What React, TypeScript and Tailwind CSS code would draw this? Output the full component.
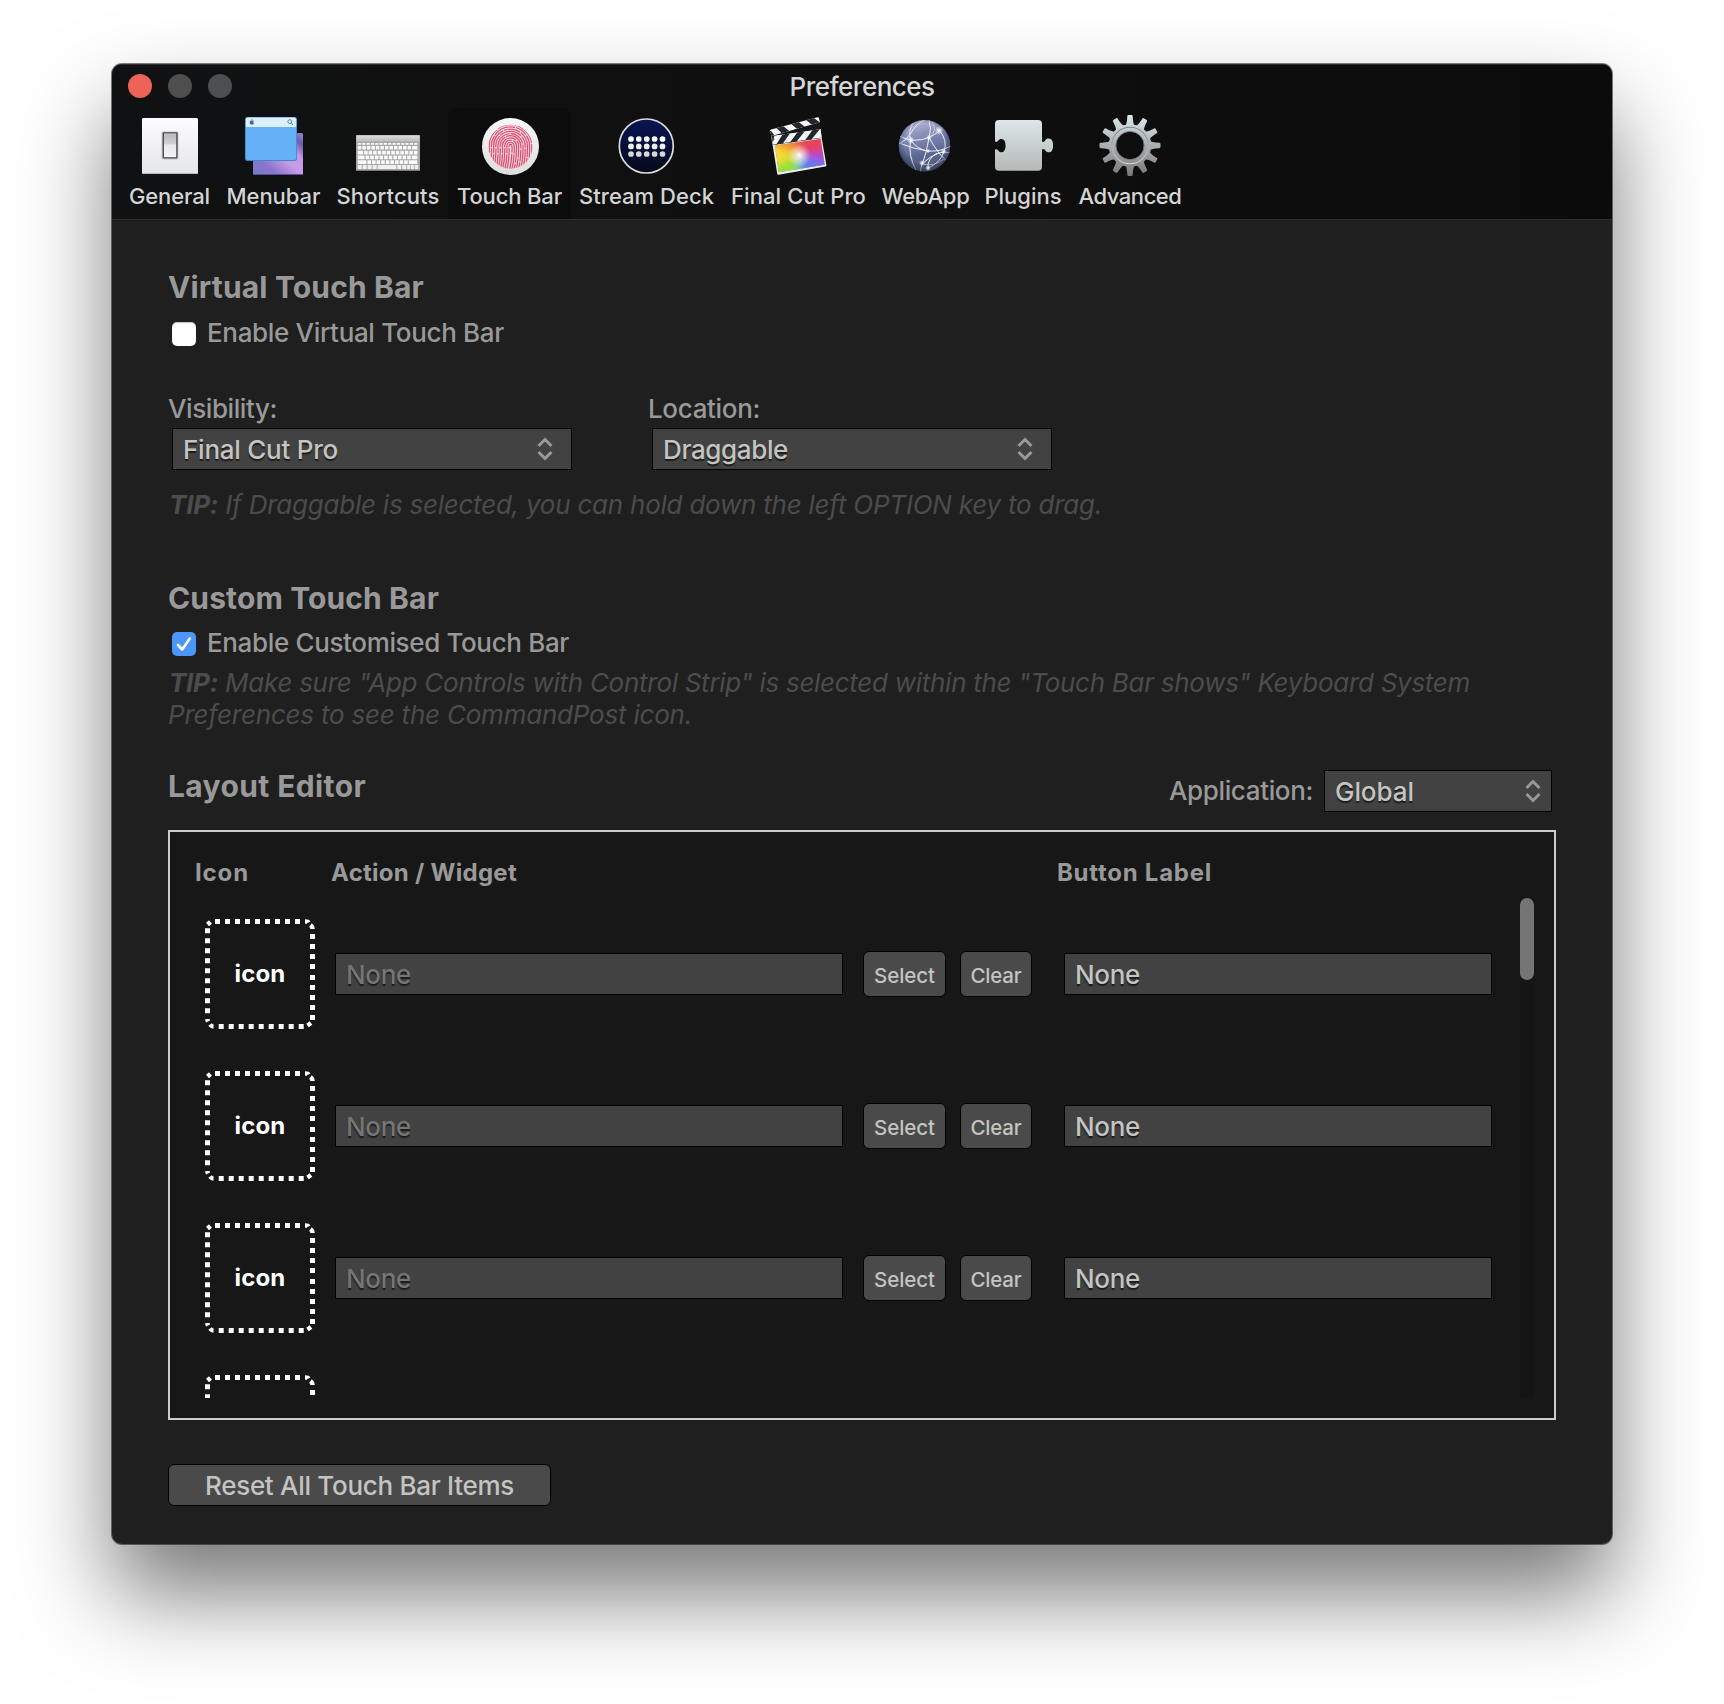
import { useLayoutEffect, useRef, useState } from "react";
import type { ReactNode } from "react";

/** Single line of text whose tracking is adjusted to fill a given width. */
function Fit({ w, children, className = "" }: { w: number; children: ReactNode; className?: string }) {
  const ref = useRef<HTMLSpanElement>(null);
  const [spacing, setSpacing] = useState(0);
  useLayoutEffect(() => {
    const el = ref.current;
    if (!el) return;
    const n = (el.textContent || "").length;
    setSpacing((w - el.getBoundingClientRect().width) / n);
  }, [w]);
  return (
    <span
      ref={ref}
      className={`inline-block whitespace-nowrap ${className}`}
      style={{ letterSpacing: `${spacing}px` }}
    >
      {children}
    </span>
  );
}

function GeneralIcon() {
  return (
    <svg className="size-16" viewBox="0 0 64 64">
      <defs>
        <linearGradient id="genPlate" x1="0" y1="0" x2="0" y2="1">
          <stop offset="0" stopColor="#fdfdfe" />
          <stop offset="1" stopColor="#e4e5ea" />
        </linearGradient>
        <linearGradient id="genSwitch" x1="0" y1="0" x2="0" y2="1">
          <stop offset="0" stopColor="#e2e2e4" />
          <stop offset="0.1" stopColor="#bcbcc0" />
          <stop offset="0.44" stopColor="#d2d2d6" />
          <stop offset="0.48" stopColor="#e8e8ec" />
          <stop offset="1" stopColor="#f3f3f6" />
        </linearGradient>
      </defs>
      <rect x="4" y="5" width="56" height="56" rx="1.5" fill="url(#genPlate)" />
      <path d="M4.5 60.5H59.5" stroke="#b9babd" strokeWidth="1" />
      <rect x="23.5" y="18.5" width="17" height="28" rx="1.5" fill="#c4c5c8" />
      <rect x="25.3" y="19.8" width="13.6" height="25" rx="0.5" fill="url(#genSwitch)" stroke="#46474b" strokeWidth="1.3" />
    </svg>
  );
}

function MenubarIcon() {
  return (
    <svg className="size-16" viewBox="0 0 64 64">
      <defs>
        <linearGradient id="mbDesk" x1="0" y1="1" x2="1" y2="0">
          <stop offset="0" stopColor="#6f7fc4" />
          <stop offset="0.25" stopColor="#8b74cf" />
          <stop offset="0.5" stopColor="#c79be6" />
          <stop offset="0.68" stopColor="#c59ae8" />
          <stop offset="0.85" stopColor="#6f5db4" />
          <stop offset="1" stopColor="#a184c8" />
        </linearGradient>
      </defs>
      <rect x="11" y="20" width="50" height="42" rx="1.5" fill="url(#mbDesk)" />
      <path d="M11.5 61.5H60.5" stroke="#5a4ca0" strokeWidth="1" />
      <rect x="3" y="4" width="52" height="44" rx="2.5" fill="#3f87c6" />
      <rect x="3.8" y="4.6" width="50.4" height="42.4" rx="2" fill="#64b1f8" />
      <path d="M3.8 14V6.6a2 2 0 0 1 2-2H52.2a2 2 0 0 1 2 2V14Z" fill="#dceffd" />
      <path d="M9.1 7.6c.7-.3 1.3.1 1.7 0 .6-.4 .8-.2 1 .2-.9.8-.6 2 .2 2.4-.4 1-1 1.7-1.7 1.3-.4-.2-.7-.1-1.1.1C8 11.9 6.5 8.3 9.1 7.600ZM9.4 7.200c0-.8.500-1.300 1.200-1.400 0 .8-.5 1.400-1.200 1.400Z" fill="#4c6a86" />
      <circle cx="47.8" cy="8.6" r="1.900" fill="none" stroke="#4c7494" strokeWidth="0.9" />
      <path d="M49.200 10l1.900 1.900" stroke="#4c7494" strokeWidth="1" />
    </svg>
  );
}

function KeyboardIcon() {
  const keys: ReactNode[] = [];
  const rows = [
    { y: 29.9, h: 1.9, n: 14, off: 0, last: 0 },
    { y: 32.9, h: 3.7, n: 13, off: 0, last: 1.8 },
    { y: 37.7, h: 3.7, n: 13, off: 1.8, last: 0 },
    { y: 42.5, h: 3.7, n: 12, off: 3.2, last: 2 },
    { y: 47.3, h: 3.7, n: 11, off: 5, last: 5 },
  ];
  rows.forEach((r, j) => {
    const cell = (60.6 - r.off - r.last) / r.n;
    for (let i = 0; i < r.n; i++) {
      const x = 1.8 + (i === 0 ? 0 : r.off + i * cell);
      const w = cell - 1 + (i === 0 ? r.off : 0) + (i === r.n - 1 ? r.last : 0);
      keys.push(<rect key={`${j}-${i}`} x={x} y={r.y} width={w} height={r.h} rx="0.4" fill="#fafafa" />);
    }
  });
  const bottom = [
    [1.8, 4], [6.7, 4], [11.7, 4], [16.7, 4], [21.7, 18.5], [41.2, 4], [46.2, 4], [51.1, 3], [54.9, 3], [58.7, 3.5],
  ];
  return (
    <svg className="size-16" viewBox="0 0 64 64">
      <defs>
        <linearGradient id="kbTop" x1="0" y1="0" x2="0" y2="1">
          <stop offset="0" stopColor="#dcdcdc" />
          <stop offset="1" stopColor="#bdbdbd" />
        </linearGradient>
      </defs>
      <rect x="0" y="22" width="64" height="36" rx="0.8" fill="#a8a8a8" />
      <rect x="0.5" y="22.5" width="63" height="6" fill="url(#kbTop)" />
      <path d="M0 57.5H64" stroke="#777" strokeWidth="1" />
      {keys}
      {bottom.map(([x, w]) => (
        <rect key={x} x={x} y="52" width={w} height="3.9" rx="0.4" fill="#f0f0f0" />
      ))}
    </svg>
  );
}

function TouchIcon() {
  const arches = [1.5, 3.7, 5.9, 8.1, 10.3, 12.5, 14.7, 16.9, 19.1, 21.3];
  return (
    <svg className="size-16" viewBox="0 0 64 64">
      <defs>
        <linearGradient id="tbRing" x1="0" y1="0" x2="0" y2="1">
          <stop offset="0" stopColor="#f8f8f8" />
          <stop offset="1" stopColor="#dedede" />
        </linearGradient>
        <clipPath id="tbClip">
          <circle cx="32.5" cy="33.7" r="22" />
        </clipPath>
      </defs>
      <circle cx="32.5" cy="33.5" r="28.5" fill="url(#tbRing)" />
      <g clipPath="url(#tbClip)" fill="none" stroke="#e8486f" strokeWidth="1.3">
        {arches.map((r, i) => (
          <path
            key={r}
            d={`M${32.5 - r - 2.5} 58Q${32.5 - r + 0.8} 46 ${32.5 - r} 33A${r} ${r} 0 0 1 ${32.5 + r} 33Q${32.5 + r + 0.3} 48 ${32.5 + r - 3} 58`}
            strokeDasharray={i % 2 ? "17 0.9 26 0.9" : "23 0.9 12 0.9"}
          />
        ))}
      </g>
    </svg>
  );
}

function StreamDeckIcon() {
  return (
    <svg className="size-16" viewBox="0 0 64 64">
      <defs>
        <linearGradient id="sdBg" x1="0" y1="0" x2="0" y2="1">
          <stop offset="0" stopColor="#0a1552" />
          <stop offset="0.45" stopColor="#070f3c" />
          <stop offset="1" stopColor="#060a18" />
        </linearGradient>
      </defs>
      <circle cx="31.3" cy="33" r="27" fill="url(#sdBg)" stroke="#dcdcdc" strokeWidth="1.7" />
      {[26, 33.4, 41].map((y, j) =>
        [16, 23.8, 31.7, 39.6, 47.5].map((x) => (
          <circle key={`${x}-${y}`} cx={x} cy={y} r="2.85" fill={["#ffffff", "#efefef", "#d8d8d8"][j]} />
        ))
      )}
    </svg>
  );
}

function FinalCutIcon() {
  return (
    <svg className="size-16" viewBox="0 0 64 64">
      <defs>
        <clipPath id="fcBody">
          <path d="M8 32.6L53.5 26 57.7 51.8 11.7 59.2Z" />
        </clipPath>
        <clipPath id="fcArm">
          <path d="M2.8 18.2Q2.6 16.8 4 16.4L50.5 4.3Q51.7 4 52 5.2L52.9 9.2 4.5 23Z" />
        </clipPath>
        <clipPath id="fcBar">
          <path d="M4.2 23L53.5 16 54.7 25 6.3 32Z" />
        </clipPath>
        <filter id="fcBlur" x="-40%" y="-40%" width="180%" height="180%">
          <feGaussianBlur stdDeviation="4" />
        </filter>
        <radialGradient id="fcGlow" gradientUnits="userSpaceOnUse" cx="32.3" cy="42.5" r="11.5">
          <stop offset="0" stopColor="#fff" />
          <stop offset="0.3" stopColor="#fff" stopOpacity="0.6" />
          <stop offset="1" stopColor="#fff" stopOpacity="0" />
        </radialGradient>
      </defs>
      <path d="M4.2 23L53.5 16 54.7 25 59.4 52.2Q59.5 53.3 58.4 53.5L11.7 61.8Q10.4 62 10.2 60.7Z" fill="#e9edf2" />
      <g clipPath="url(#fcBody)">
        <rect x="4" y="20" width="58" height="44" fill="#f06a4a" />
        <g filter="url(#fcBlur)">
          <path d="M32 42L0 26 0 12 32 14Z" fill="#f08a35" />
          <path d="M32 42L28 10 70 10 68 38Z" fill="#ea4256" />
          <path d="M32 42L70 36 72 60Z" fill="#a844d6" />
          <path d="M32 42L72 54 56 74 33 70Z" fill="#5a7af2" />
          <path d="M32 42L34 72 6 72 0 56Z" fill="#8ee23c" />
          <path d="M32 42L-4 58 -4 26Z" fill="#f5dd35" />
        </g>
        <rect x="4" y="20" width="58" height="44" fill="url(#fcGlow)" />
      </g>
      <g clipPath="url(#fcBar)">
        <rect x="0" y="10" width="60" height="24" fill="#f4f5f7" />
        <path d="M3 23L7.5 22.5 5 32 3 32ZM15.5 21.4L23 20.3 15.5 31 9 32ZM30.5 19.2L38 18 29 29.3 22.5 30ZM45.5 17L53 16 44 27 37.5 28Z" fill="#23272d" />
        <path d="M6 32L55 25" stroke="#33383e" strokeWidth="1" />
      </g>
      <path d="M4.2 23L53 9.2 53.5 16Z" fill="#15181b" />
      <g clipPath="url(#fcArm)">
        <rect x="0" y="0" width="60" height="26" fill="#f8f8f8" />
        <path d="M8 13.5L15 12 24.5 20 16.5 22ZM23 10L30.5 8 40 15.5 32 17.5ZM38 6L45.5 4 55 11 47 13.5ZM0 18L4 18 9 24 0 25Z" fill="#23272d" />
      </g>
      <circle cx="5.8" cy="26.3" r="1.5" fill="#4a5563" />
    </svg>
  );
}

function WebIcon() {
  return (
    <svg className="size-16" viewBox="0 0 64 64">
      <defs>
        <linearGradient id="waBall" x1="0.3" y1="0" x2="0.55" y2="1">
          <stop offset="0" stopColor="#b9bbdc" />
          <stop offset="0.35" stopColor="#808ab4" />
          <stop offset="0.7" stopColor="#59668f" />
          <stop offset="1" stopColor="#5a5f7c" />
        </linearGradient>
        <radialGradient id="waEdge" cx="0.5" cy="0.45" r="0.55">
          <stop offset="0.7" stopColor="#20264a" stopOpacity="0" />
          <stop offset="1" stopColor="#20264a" stopOpacity="0.6" />
        </radialGradient>
        <radialGradient id="waNode">
          <stop offset="0" stopColor="#fff" />
          <stop offset="1" stopColor="#fff" stopOpacity="0" />
        </radialGradient>
        <clipPath id="waClip">
          <circle cx="30.5" cy="32.7" r="25.7" />
        </clipPath>
      </defs>
      <circle cx="30.5" cy="32.7" r="25.7" fill="url(#waBall)" />
      <g clipPath="url(#waClip)" fill="none" stroke="#eef0fb" strokeWidth="1">
        <path d="M5 23Q20 31 36 24 44 20 46 17" />
        <path d="M5 31Q13 27 17 20 21 12 30 7" />
        <path d="M16.5 27Q14 43 22 57" />
        <path d="M16.5 27Q14 18 19 10" />
        <path d="M16.5 27Q24 37 34 38 46 39 57 33" />
        <path d="M5 30Q20 36 34 38" />
        <path d="M35 7Q38 16 35 24.5 32 42 28 51 27 55 26 60" />
        <path d="M35 24.5Q39 32 45 40 50 46 53 48" />
        <path d="M45 17Q54 27 50 39 46 50 34 55" />
        <path d="M28 51Q36 43 45 40 50 38 57 40" />
        <path d="M34 55Q33 46 43 40" />
        <path d="M35 24.5Q44 18 38 9" strokeOpacity="0.6" />
        <path d="M28 51Q40 54 50 46" strokeOpacity="0.7" />
      </g>
      <circle cx="30.5" cy="32.7" r="25.7" fill="url(#waEdge)" />
      {[
        [16.5, 27, 4],
        [35, 24.5, 3],
        [45, 17.5, 4.5],
        [34, 38, 2.5],
        [28, 50, 3],
        [34, 55, 3],
        [49.5, 38.5, 3],
      ].map(([x, y, r]) => (
        <circle key={`${x}${y}`} cx={x} cy={y} r={r} fill="url(#waNode)" />
      ))}
    </svg>
  );
}

function PluginIcon() {
  return (
    <svg className="size-16" viewBox="0 0 64 64">
      <defs>
        <linearGradient id="plBody" x1="0" y1="0" x2="0" y2="1">
          <stop offset="0" stopColor="#dde6e8" />
          <stop offset="1" stopColor="#b4b8b9" />
        </linearGradient>
      </defs>
      <path
        d="M8 7H47Q51 7 51 11V28.5C53 29.5 53.5 28.5 54.5 27 56 25 58.5 25.2 60 26.2 62.8 28.5 62.8 36.5 60 38.7 58.5 39.7 56 39.7 54.5 37.7 53.5 36.2 53 35.3 51 36.5V53.7Q51 57.7 47 57.7H8Q4 57.7 4 53.7V36.7C6 35.7 6.5 36.5 7.5 38 9 39.7 11.5 39.5 12.7 38.5 15.2 36 15.2 29 12.7 26.8 11.5 25.8 9 25.6 7.5 27.3 6.5 28.8 6 29.6 4 28.6V11Q4 7 8 7Z"
        fill="url(#plBody)"
      />
    </svg>
  );
}

function GearIcon() {
  const teeth = Array.from({ length: 12 }, (_, i) => i * 30);
  return (
    <svg className="size-16" viewBox="0 0 64 64">
      <defs>
        <linearGradient id="gearFill" gradientUnits="userSpaceOnUse" x1="0" y1="2" x2="0" y2="63">
          <stop offset="0" stopColor="#dbe8ec" />
          <stop offset="0.5" stopColor="#a9afb2" />
          <stop offset="1" stopColor="#77787a" />
        </linearGradient>
        <linearGradient id="gearLine" x1="0" y1="0" x2="0" y2="1">
          <stop offset="0" stopColor="#7b858a" />
          <stop offset="1" stopColor="#d0d2d3" />
        </linearGradient>
        <mask id="gearMask">
          <g fill="#fff">
            <circle cx="32" cy="32.5" r="21.3" />
            {teeth.map((a) => (
              <path key={a} d="M27 13.5Q29 11 29.3 3.2 29.4 2 30.4 2H33.6Q34.6 2 34.7 3.2 35 11 37 13.5Z" transform={`rotate(${a} 32 32.5)`} />
            ))}
          </g>
          <circle cx="32" cy="32.5" r="13.8" fill="#000" />
        </mask>
      </defs>
      <rect width="64" height="64" fill="url(#gearFill)" mask="url(#gearMask)" />
      <circle cx="32" cy="32.5" r="18.3" fill="none" stroke="url(#gearLine)" strokeWidth="1.1" />
      <circle cx="32" cy="32.5" r="14.2" fill="none" stroke="#6d7477" strokeWidth="0.9" />
    </svg>
  );
}

const tabs = [
  { name: "General", cell: "w-[99px]", w: 81, icon: <GeneralIcon /> },
  { name: "Menubar", cell: "w-[109px]", w: 94, icon: <MenubarIcon /> },
  { name: "Shortcuts", cell: "w-[120px]", w: 103, icon: <KeyboardIcon /> },
  { name: "Touch Bar", cell: "w-[123px] rounded-t-lg bg-[#0d0c0c]", w: 105, icon: <TouchIcon /> },
  { name: "Stream Deck", cell: "w-[151px]", w: 135, icon: <StreamDeckIcon /> },
  { name: "Final Cut Pro", cell: "w-[153px]", w: 135, icon: <FinalCutIcon /> },
  { name: "WebApp", cell: "w-[101px]", w: 88, icon: <WebIcon /> },
  { name: "Plugins", cell: "w-[94px]", w: 77, icon: <PluginIcon /> },
  { name: "Advanced", cell: "w-[120px]", w: 103, icon: <GearIcon /> },
];

function Select({ value, w, className }: { value: string; w: number; className: string }) {
  return (
    <div
      className={`flex h-[42px] items-center justify-between border border-black bg-[#424242] pl-2.5 text-[26px] text-[#c4c4c0] ${className}`}
    >
      <Fit w={w} className="pt-px leading-8 [text-shadow:0_2px_1px_rgba(0,0,0,0.6)]">{value}</Fit>
      <svg className="h-6 w-4" viewBox="0 0 16 24" fill="none" stroke="#999" strokeWidth="3">
        <path d="M1.5 9L8 2.5 14.5 9M1.5 15L8 21.5 14.5 15" />
      </svg>
    </div>
  );
}

function IconWell({ label }: { label?: string }) {
  return (
    <div className="grid size-[110px] shrink-0 place-items-center">
      <svg className="col-start-1 row-start-1 size-[110px]" viewBox="0 0 110 110" fill="none" stroke="#fff" strokeWidth="5">
        <path d="M10 2.5H96M107.5 15V51M107.5 56V102" strokeDasharray="5 5" />
        <path d="M13.7 107.5H99M2.5 9.3V95" strokeDasharray="5 5" />
        <path d="M2.5 5.5L5.5 3M100 2.5Q103 2.5 103.5 3.5M105.5 6Q107.5 7.5 107.5 10M2.5 100Q2.5 101.5 3 102.5M5 105.5Q6.5 107.5 8.5 107.5M102.5 106.500L106 104" strokeWidth="4.5" />
      </svg>
      {label && (
        <Fit w={51} className="col-start-1 row-start-1 text-[24px] font-bold leading-8 text-white">{label}</Fit>
      )}
    </div>
  );
}

function SmallButton({ children, w, className }: { children: string; w: number; className: string }) {
  return (
    <button
      className={`flex h-[46px] shrink-0 items-center justify-center rounded-md border border-black bg-[#4a4a4a] pt-[3px] text-[20.5px] text-[#c4c4c0] ${className}`}
    >
      <Fit w={w}>{children}</Fit>
    </button>
  );
}

function Row() {
  return (
    <div className="flex h-[110px] shrink-0 items-center">
      <IconWell label="icon" />
      <div className="ml-5 flex h-[42px] w-[508px] shrink-0 items-center border border-black bg-[#424242] pl-2.5 pt-px text-[26px] leading-8 text-[#757575]">
        <Fit w={65} className="[text-shadow:0_2px_1px_rgba(0,0,0,0.6)]">None</Fit>
      </div>
      <SmallButton w={61} className="ml-5 w-[83px]">Select</SmallButton>
      <SmallButton w={51} className="ml-3.5 w-[72px]">Clear</SmallButton>
      <div className="ml-8 flex h-[42px] w-[428px] shrink-0 items-center border border-black bg-[#424242] pl-2.5 pt-px text-[26px] leading-8 text-[#c4c4c0]">
        <Fit w={65} className="[text-shadow:0_2px_1px_rgba(0,0,0,0.6)]">None</Fit>
      </div>
    </div>
  );
}

export default function App() {
  return (
    <div className="h-[1704px] w-[1724px] overflow-hidden bg-white px-28 pt-16 font-['Inter',sans-serif] text-[26px] font-[450] leading-8 text-[#999]">
      <div className="flex h-[1480px] w-[1500px] flex-col overflow-hidden rounded-[10px] bg-[#1f1f1f] shadow-[0_0_0_1px_rgba(0,0,0,0.5),0_50px_90px_rgba(0,0,0,0.53)]">
        <header className="flex h-[156px] shrink-0 flex-col border-b border-[#2e2e2e] border-t border-t-[#2a2a2a] bg-gradient-to-r from-[#101112] via-[#0f0f0f] to-[#0b0b0b]">
          <div className="grid h-[43px] shrink-0 grid-cols-[1fr_auto_1fr] items-center">
            <div className="flex gap-4 pb-px pl-4">
              <span className="size-6 rounded-full bg-[#ee6358]" />
              <span className="size-6 rounded-full bg-[#4e4e4e]" />
              <span className="size-6 rounded-full bg-[#4d4e50]" />
            </div>
            <Fit w={145} className="text-[#d6d6d6]">Preferences</Fit>
          </div>
          <nav className="flex grow pl-2">
            {tabs.map((t) => (
              <div key={t.name} className={`flex shrink-0 flex-col items-center pt-[5px] ${t.cell}`}>
                {t.icon}
                <Fit w={t.w} className="mt-[5px] text-[22px] leading-7 text-[#d4d4d4]">{t.name}</Fit>
              </div>
            ))}
          </nav>
        </header>

        <main className="flex flex-col items-start px-14 pt-[49px]">
          <h2 className="text-[30px] font-bold leading-9"><Fit w={256}>Virtual Touch Bar</Fit></h2>
          <label className="mt-3 flex">
            <span className="ml-1 mt-[5px] size-6 rounded-[5px] bg-white shadow-[inset_0_1px_1px_rgba(0,0,0,0.25)]" />
            <Fit w={297} className="ml-[11px]">Enable Virtual Touch Bar</Fit>
          </label>
          <div className="mt-11 flex gap-20">
            <div className="flex w-[400px] flex-col items-start">
              <Fit w={109}>Visibility:</Fit>
              <Select value="Final Cut Pro" w={155} className="ml-1 mt-[3px] w-[400px] pr-[18px]" />
            </div>
            <div className="flex w-[400px] flex-col items-start">
              <Fit w={112}>Location:</Fit>
              <Select value="Draggable" w={125} className="ml-1 mt-[3px] w-[400px] pr-[18px]" />
            </div>
          </div>
          <p className="mt-[19px] italic text-[#4c4c4c]">
            <Fit w={933} className="ml-px"><b>TIP:</b> If Draggable is selected, you can hold down the left OPTION key to drag.</Fit>
          </p>

          <h2 className="mt-[59px] text-[30px] font-bold leading-9"><Fit w={271}>Custom Touch Bar</Fit></h2>
          <label className="mt-[11px] flex">
            <span className="ml-1 mt-[5px] grid size-6 place-items-center rounded-[5px] bg-[#4c96f8]">
              <svg className="size-6" viewBox="0 0 24 24" fill="none" stroke="#fff" strokeWidth="2.6" strokeLinecap="round" strokeLinejoin="round">
                <path d="M6 13L10.2 17.5 17.8 6.5" />
              </svg>
            </span>
            <Fit w={362} className="ml-[11px]">Enable Customised Touch Bar</Fit>
          </label>
          <p className="mt-2 flex flex-col items-start italic text-[#4c4c4c]">
            <Fit w={1301} className="ml-px"><b>TIP:</b> Make sure "App Controls with Control Strip" is selected within the "Touch Bar shows" Keyboard System</Fit>
            <Fit w={524}>Preferences to see the CommandPost icon.</Fit>
          </p>

          <div className="mt-[37px] flex w-full items-start">
            <h2 className="text-[30px] font-bold leading-9"><Fit w={198}>Layout Editor</Fit></h2>
            <Fit w={144} className="ml-auto mt-[7px]">Application:</Fit>
            <Select value="Global" w={79} className="ml-[11px] mr-1 mt-0.5 w-[228px] pr-[10px]" />
          </div>

          <section className="mt-[18px] h-[590px] w-[1388px] border-2 border-[#ccc] bg-[#171717] pt-[25px]">
            <div className="flex pl-[25px] text-[24px] font-bold">
              <div className="w-[136px]"><Fit w={54}>Icon</Fit></div>
              <div className="w-[726px]"><Fit w={186}>Action / Widget</Fit></div>
              <Fit w={155}>Button Label</Fit>
            </div>
            <div className="mt-[9px] flex h-[500px] overflow-hidden pl-[35px]">
              <div className="flex w-[1287px] shrink-0 flex-col gap-[42px] pt-[21px]">
                <Row />
                <Row />
                <Row />
                <IconWell />
              </div>
              <div className="ml-7 w-3.5 bg-[#151515]">
                <div className="h-[82px] rounded-full bg-[#757575]" />
              </div>
            </div>
          </section>

          <button className="mt-11 flex h-[42px] w-[383px] items-center justify-center rounded-md border border-black bg-[#4a4a4a] pt-[2px] text-[#c4c4c0]">
            <Fit w={309}>Reset All Touch Bar Items</Fit>
          </button>
        </main>
      </div>
    </div>
  );
}
